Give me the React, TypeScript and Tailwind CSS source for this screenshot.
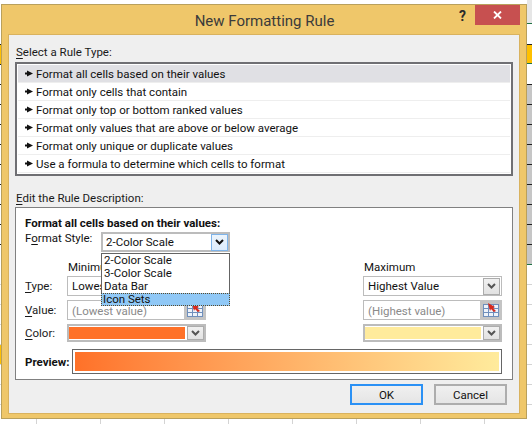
import React from "react";

const rules = [
  "Format all cells based on their values",
  "Format only cells that contain",
  "Format only top or bottom ranked values",
  "Format only values that are above or below average",
  "Format only unique or duplicate values",
  "Use a formula to determine which cells to format",
];

const ticks = (from: number, to: number) => {
  const out: number[] = [];
  for (let y = from; y <= to; y += 20) out.push(y);
  return out;
};

function Chevron({ dark }: { dark?: boolean }) {
  return (
    <svg width="9" height="6" viewBox="0 0 9 6">
      <path d="M1 1 L4.5 4.5 L8 1" fill="none" stroke={dark ? "#111" : "#555"} strokeWidth="2" />
    </svg>
  );
}

function DropBtn({ w = "w-[17px]", h = "h-[17px]" }: { w?: string; h?: string }) {
  return (
    <div className={`${w} ${h} shrink-0 flex items-center justify-center border border-[#acacac] bg-gradient-to-b from-[#f0f0f0] to-[#e2e2e2]`}>
      <Chevron />
    </div>
  );
}

function RangeIcon() {
  return (
    <div className="w-[22px] h-[20px] shrink-0 flex items-center justify-center bg-[#c4c4c4]">
      <svg width="16" height="14" viewBox="0 0 16 14">
        <rect x="0.5" y="1.5" width="15" height="12" fill="#eef3fa" stroke="#6f8fbc" />
        <path d="M0 5.5H16M0 9.5H16M5.5 2V14M10.5 2V14" stroke="#6f8fbc" strokeWidth="1" />
        <path d="M5 0 L12 4 L10 5 L13 8 L11 9 L8 6 L7 8 Z" fill="#d8291c" />
      </svg>
    </div>
  );
}

function RuleArrow() {
  return (
    <svg width="8" height="7" viewBox="0 0 8 7" className="shrink-0">
      <path d="M0 2.5H3V4.5H0Z" fill="#111" />
      <path d="M2 0.5 L8 3.5 L2 6.5 Z" fill="#111" />
    </svg>
  );
}

function U({ children }: { children: React.ReactNode }) {
  return <span className="underline underline-offset-2">{children}</span>;
}

function Label({ children }: { children: React.ReactNode }) {
  return <div className="w-[42px] shrink-0 leading-[16px] text-[#1a1a1a]">{children}</div>;
}

export default function App() {
  return (
    <div className="relative w-[532px] h-[424px] overflow-hidden bg-white font-['Roboto','Open_Sans',sans-serif] text-[11.5px] text-[#111]">
      {/* spreadsheet behind the dialog */}
      <div className="absolute left-0 top-[44px] w-[2px] h-[20px] bg-[#ffc000]" />
      <div className="absolute left-0 top-[344px] w-[2px] h-[20px] bg-[#ffc000]" />
      {ticks(44, 244).map((y) => (
        <div key={y} className="absolute left-0 w-[2px] h-px bg-[#222]" style={{ top: y }} />
      ))}
      {ticks(284, 404).map((y) => (
        <div key={y} className="absolute left-0 w-[2px] h-px bg-[#d4d4d4]" style={{ top: y }} />
      ))}
      <div className="absolute right-0 top-0 w-[5px] h-[23px] bg-[#e6e6e6]" />
      <div className="absolute right-0 top-[23px] w-[5px] h-px bg-[#217346]" />
      <div className="absolute right-0 top-[44px] w-[5px] h-[20px] bg-[#ffc000] border-t border-t-[#222] border-b border-b-[#217346]" />
      <div className="absolute right-0 top-[84px] w-[5px] h-[180px] bg-[#c6c6c6]" />
      {ticks(84, 244).map((y) => (
        <div key={y} className="absolute right-0 w-[5px] h-px bg-[#222]" style={{ top: y }} />
      ))}
      <div className="absolute right-0 top-[264px] w-[5px] h-px bg-[#217346]" />
      {ticks(284, 404).map((y) => (
        <div key={y} className="absolute right-0 w-[5px] h-px bg-[#d4d4d4]" style={{ top: y }} />
      ))}
      {[36, 100, 164, 228, 292, 356, 420, 484].map((x) => (
        <div key={x} className="absolute bottom-0 w-px h-[6px] bg-[#d4d4d4]" style={{ left: x }} />
      ))}

      {/* dialog */}
      <div className="relative ml-[1px] mt-[4px] w-[526px] h-[415px] border border-[#b9a05c] bg-[#efc76a] flex flex-col">
        <div className="h-[29px] shrink-0 flex relative items-center justify-center">
          <div className="text-[15px] leading-[20px] text-[#3b3b3b] mt-[2px] ml-[1px]">New Formatting Rule</div>
          <div className="absolute left-[457px] top-[1px] text-[14px] leading-[20px] font-bold text-[#2b2b2b]">?</div>
          <div className="absolute right-[6px] top-0 w-[45px] h-[20px] bg-[#c75050] flex items-center justify-center">
            <svg width="9" height="8" viewBox="0 0 9 8">
              <path d="M1 0.5 L8 7.5 M8 0.5 L1 7.5" stroke="#fff" strokeWidth="1.8" />
            </svg>
          </div>
        </div>
        <div className="ml-[6px] mr-[6px] w-[512px] h-[380px] border border-[#d9b25e] bg-[#efefef] flex flex-col pl-[6px]">
          <div className="mt-[9px] h-[16px] leading-[16px] ml-[1px] text-[#1a1a1a]">
            <U>S</U>elect a Rule Type:
          </div>
          <div className="mt-[2px] w-[498px] h-[114px] border-2 border-[#6f6f73] bg-white p-px">
            {rules.map((r, i) => (
              <div
                key={r}
                className={`h-[18px] flex items-center gap-[3px] pl-[7px] border-b border-b-[#eeeeee] leading-[16px] ${i === 0 ? "bg-[#e0e0e4]" : ""}`}
              >
                <RuleArrow />
                <span>{r}</span>
              </div>
            ))}
          </div>
          <div className="mt-[14px] h-[16px] leading-[16px] ml-[1px] text-[#1a1a1a]">
            <U>E</U>dit the Rule Description:
          </div>
          <div className="mt-[1px] w-[498px] h-[173px] border border-[#808080] bg-white pl-[9px] pt-[7px] flex flex-col">
            <div className="h-[16px] leading-[16px] font-bold text-[#111]">Format all cells based on their values:</div>
            <div className="relative mt-[1px] h-[20px] flex">
              <div className="w-[76px] shrink-0 leading-[16px] -mt-[2px]">
                F<U>o</U>rmat Style:
              </div>
              <div className="w-[129px] h-[20px] border-2 border-[#bcbcbc] flex items-center justify-between pl-[3px] pr-0 ">
                <span className="leading-[16px] -mt-px">2-Color Scale</span>
                <div className="w-[17px] h-[17px] flex items-center justify-center border border-[#7eb4ea] bg-gradient-to-b from-[#ecf4fc] to-[#dcecfc]">
                  <Chevron dark />
                </div>
              </div>
              <div className="absolute left-[76px] top-[21px] z-10 w-[129px] h-[53px] border border-[#646464] bg-white leading-[13px] flex flex-col">
                <div className="h-[13px] pl-[2px]">2-Color Scale</div>
                <div className="h-[13px] pl-[2px]">3-Color Scale</div>
                <div className="h-[13px] pl-[2px]">Data Bar</div>
                <div className="h-[13px] pl-px -mx-px bg-[#90c8f6] border border-dotted border-[#5a4a2a] leading-[11px]">Icon Sets</div>
              </div>
            </div>
            <div className="mt-[7px] h-[17px] flex leading-[16px]">
              <div className="ml-[43px] w-[296px]">Minimum</div>
              <div>Maximum</div>
            </div>
            <div className="h-[20px] flex items-center">
              <Label><U>T</U>ype:</Label>
              <div className="w-[139px] h-[20px] border border-[#bcbcbc] flex items-center pl-[4px] leading-[16px]">Lowest Value</div>
              <div className="ml-[157px] w-[139px] h-[20px] border border-[#bcbcbc] flex items-center justify-between pl-[4px] pr-px leading-[16px]">
                <span>Highest Value</span>
                <DropBtn />
              </div>
            </div>
            <div className="mt-[4px] h-[20px] flex items-center">
              <Label><U>V</U>alue:</Label>
              <div className="w-[139px] h-[20px] border border-[#bcbcbc] flex items-center justify-between pl-[4px] leading-[16px] text-[#8a8a8a]">
                <span className="mt-px">(Lowest value)</span>
                <div className="-mr-px"><RangeIcon /></div>
              </div>
              <div className="ml-[157px] w-[139px] h-[20px] border border-[#bcbcbc] flex items-center justify-between pl-[4px] leading-[16px] text-[#8a8a8a]">
                <span className="mt-px">(Highest value)</span>
                <div className="-mr-px"><RangeIcon /></div>
              </div>
            </div>
            <div className="mt-[4px] h-[18px] flex items-center">
              <Label><U>C</U>olor:</Label>
              <div className="w-[139px] h-[18px] border-2 border-[#bcbcbc] flex items-center justify-between bg-white">
                <div className="w-[116px] h-[12px] bg-[#ff7128]" />
                <DropBtn h="h-[14px]" />
              </div>
              <div className="ml-[157px] w-[139px] h-[18px] border-2 border-[#bcbcbc] flex items-center justify-between bg-white">
                <div className="w-[116px] h-[12px] bg-[#ffeb9c]" />
                <DropBtn h="h-[14px]" />
              </div>
            </div>
            <div className="mt-[7px] h-[25px] flex items-center">
              <div className="w-[47px] shrink-0 font-bold leading-[16px]">Preview:</div>
              <div className="w-[430px] h-[25px] border border-[#666666] p-[2px]">
                <div className="w-full h-full bg-gradient-to-r from-[#ff7128] to-[#ffeb9c]" />
              </div>
            </div>
          </div>
          <div className="mt-[4px] flex gap-[11px] ml-[335px]">
            <div className="w-[73px] h-[21px] border-2 border-[#2b91f5] bg-gradient-to-b from-[#f0f0f0] to-[#e5e5e5] flex items-center justify-center leading-[16px]">OK</div>
            <div className="w-[73px] h-[21px] border-2 border-[#adadad] bg-gradient-to-b from-[#f0f0f0] to-[#e5e5e5] flex items-center justify-center leading-[16px]">Cancel</div>
          </div>
        </div>
      </div>
    </div>
  );
}
